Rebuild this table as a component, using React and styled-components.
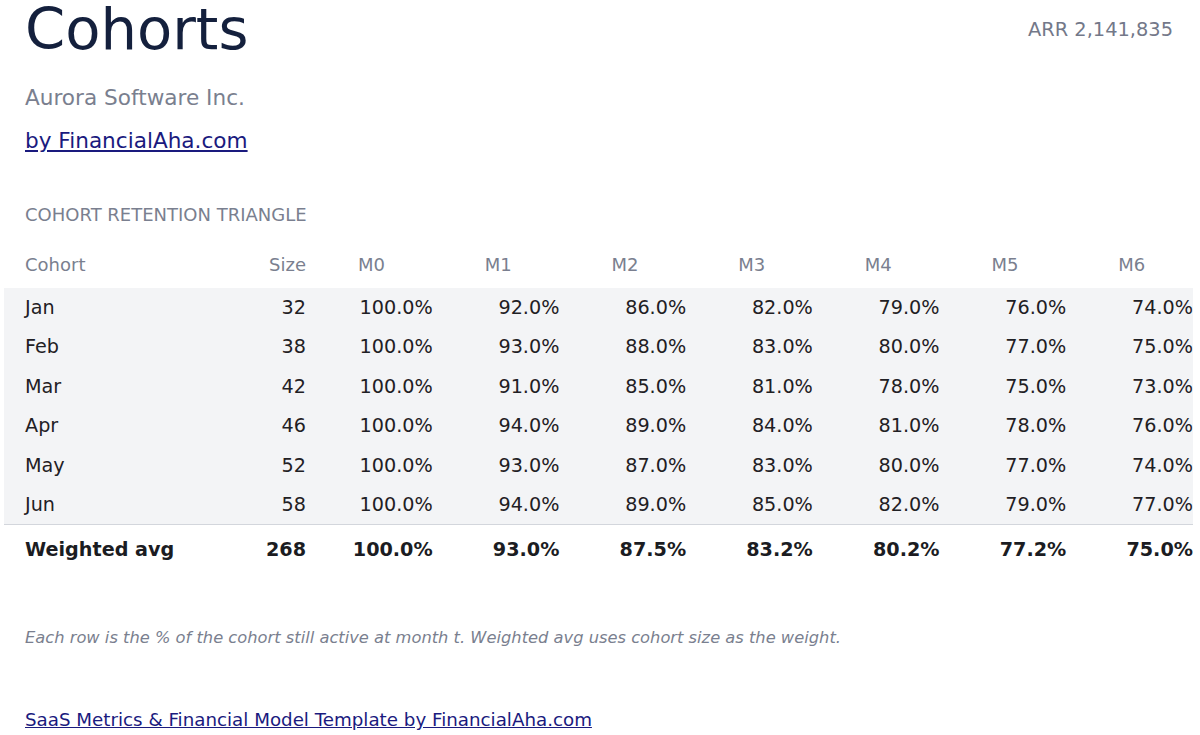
import React from "react";
import styled, { createGlobalStyle } from "styled-components";

const months = ["M0", "M1", "M2", "M3", "M4", "M5", "M6"];

const cohorts = [
  { name: "Jan", size: 32, values: [100, 92, 86, 82, 79, 76, 74] },
  { name: "Feb", size: 38, values: [100, 93, 88, 83, 80, 77, 75] },
  { name: "Mar", size: 42, values: [100, 91, 85, 81, 78, 75, 73] },
  { name: "Apr", size: 46, values: [100, 94, 89, 84, 81, 78, 76] },
  { name: "May", size: 52, values: [100, 93, 87, 83, 80, 77, 74] },
  { name: "Jun", size: 58, values: [100, 94, 89, 85, 82, 79, 77] },
];

const weighted = { size: 268, values: [100, 93, 87.5, 83.2, 80.2, 77.2, 75] };

const pct = (v) => `${v.toFixed(1)}%`;

function App() {
  return (
    <>
      <GlobalStyle />
      <Page>
        <HeaderBar>
          <Title>Cohorts</Title>
          <Arr>ARR 2,141,835</Arr>
        </HeaderBar>
        <Company>Aurora Software Inc.</Company>
        <ByLink href="#">by FinancialAha.com</ByLink>

        <SectionLabel>COHORT RETENTION TRIANGLE</SectionLabel>

        <HeadRow>
          <HeadCell>Cohort</HeadCell>
          <HeadCell $right>Size</HeadCell>
          {months.map((m) => (
            <HeadCell key={m} $month>{m}</HeadCell>
          ))}
        </HeadRow>

        <Body>
          {cohorts.map((c) => (
            <Row key={c.name}>
              <Cell>{c.name}</Cell>
              <Cell $right>{c.size}</Cell>
              {c.values.map((v, i) => (
                <Cell key={i} $right>{pct(v)}</Cell>
              ))}
            </Row>
          ))}
        </Body>

        <TotalRow>
          <Cell>Weighted avg</Cell>
          <Cell $right>{weighted.size}</Cell>
          {weighted.values.map((v, i) => (
            <Cell key={i} $right>{pct(v)}</Cell>
          ))}
        </TotalRow>

        <Note>
          Each row is the % of the cohort still active at month t. Weighted avg uses cohort size as the weight.
        </Note>

        <FooterLink href="#">SaaS Metrics &amp; Financial Model Template by FinancialAha.com</FooterLink>
      </Page>
    </>
  );
}

const GlobalStyle = createGlobalStyle`
  html, body {
    margin: 0;
    padding: 0;
    background: #ffffff;
  }
  body {
    font-family: "DejaVu Sans", "Liberation Sans", sans-serif;
    color: #1f2024;
  }
`;

const Page = styled.div`
  width: 1200px;
  height: 735px;
  box-sizing: border-box;
  padding: 4px 7px 0 25px;
  display: flex;
  flex-flow: column nowrap;
  align-items: stretch;
  overflow: hidden;
`;

const HeaderBar = styled.div`
  display: flex;
  justify-content: space-between;
  align-items: flex-start;
  padding-right: 20px;
`;

const Title = styled.h1`
  margin: 0;
  font-size: 57.6px;
  line-height: 52px;
  font-weight: 400;
  color: #14203d;
`;

const Arr = styled.div`
  font-size: 19.4px;
  line-height: 23px;
  margin-top: 14px;
  color: #737889;
`;

const Company = styled.div`
  margin-top: 29px;
  font-size: 21.6px;
  line-height: 25.9px;
  color: #7a7f8f;
`;

const ByLink = styled.a`
  align-self: flex-start;
  margin-top: 16.7px;
  font-size: 21.6px;
  line-height: 25.9px;
  color: #1a1a7e;
  text-decoration: underline;
`;

const SectionLabel = styled.div`
  margin-top: 50.2px;
  font-size: 18px;
  line-height: 21.6px;
  color: #7a7f8f;
`;

const grid = `
  display: grid;
  grid-template-columns: 200px 81px repeat(7, 1fr);
`;

const HeadRow = styled.div`
  ${grid}
  margin-top: 29px;
  padding-bottom: 12px;
`;

const HeadCell = styled.div`
  font-size: 18px;
  line-height: 21.6px;
  color: #7a7f8f;
  text-align: ${(p) => (p.$right ? "right" : "left")};
  padding-left: ${(p) => (p.$month ? "52px" : "0")};
`;

const Body = styled.div`
  margin-left: -21px;
  padding-left: 21px;
  background: #f3f4f6;
  border-bottom: 1px solid #d3d6dc;
`;

const Row = styled.div`
  ${grid}
  padding: 8.2px 0;
`;

const TotalRow = styled.div`
  ${grid}
  padding: 12.4px 0 14.4px;
  font-weight: 700;
  color: #1b1c22;
`;

const Cell = styled.div`
  font-size: 19.2px;
  line-height: 23.04px;
  white-space: nowrap;
  text-align: ${(p) => (p.$right ? "right" : "left")};
`;

const Note = styled.div`
  margin-top: 53px;
  font-size: 16.3px;
  line-height: 20px;
  font-style: italic;
  color: #7a7f8f;
`;

const FooterLink = styled.a`
  align-self: flex-start;
  margin-top: 61px;
  font-size: 18.25px;
  line-height: 21.6px;
  color: #1a1a7e;
  text-decoration: underline;
`;

export default App;
